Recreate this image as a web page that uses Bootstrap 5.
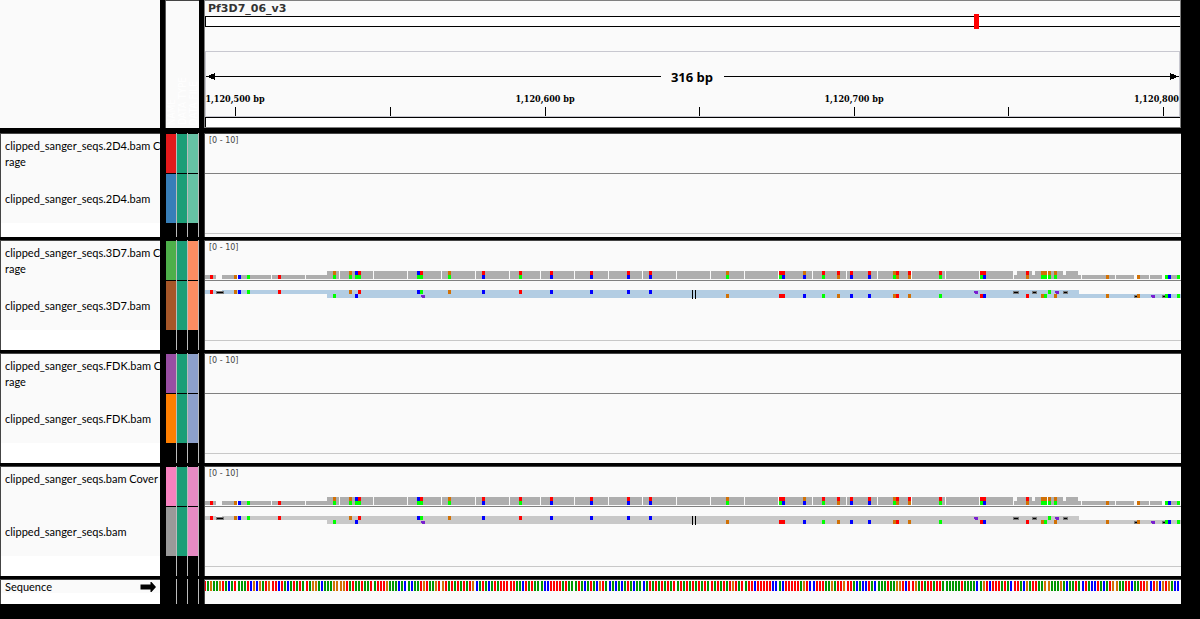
<!DOCTYPE html>
<html lang="en">
<head>
<meta charset="utf-8">
<meta name="viewport" content="width=device-width, initial-scale=1">
<title>Pf3D7_06_v3 alignments</title>
<link href="https://cdn.jsdelivr.net/npm/bootstrap@5.3.0/dist/css/bootstrap.min.css" rel="stylesheet">
<style>
  body { background: #000; color: #000; font: 11px/16px Lato, "DejaVu Sans", sans-serif; }
  .browser, .groups { gap: 3px; }
  .browser { padding-right: 19px; }
  .track-row { display: grid; grid-template-columns: 160px 34px minmax(0, 1fr); column-gap: 5px; }
  .pane { background: #fafafa; }
  .head-row { height: 128px; margin-bottom: 2px; }
  .group-row { height: 110px; }
  .group-row.first { height: 104px; }
  .seq-row { height: 25px; }

  .names { background: #fff; border-left: 1px solid #444; border-top: 1px solid #444; }
  .track-label { background: #fafafa; padding-left: 4px; white-space: pre; overflow: hidden; }
  .cov-label { height: 40px; padding-top: 4px; }
  .aln-label { height: 49px; }
  .seq-label { height: 13px; padding-right: 4px; }

  .attr-head { border-left: 1px solid #555; border-top: 1px solid #444; color: #fff; font-size: 10px; font-family: "DejaVu Sans Condensed", "DejaVu Sans", sans-serif; padding-bottom: 3px; }
  .attr-head span { writing-mode: vertical-rl; transform: rotate(180deg); width: 11px; line-height: 11px; white-space: nowrap; }
  .attrs { padding-left: 1px; }
  .attr { width: 11px; border-right: 1px solid #bbb; padding-top: 1px; }
  .chip-top { height: 39px; margin-bottom: 1px; }
  .chip-low { height: 49px; }

  .data { border-left: 1px solid #444; border-top: 1px solid #444; position: relative; }
  .data svg, .ruler svg { display: block; width: 100%; shape-rendering: crispEdges; }
  .range { position: absolute; left: 4px; top: 1px; font-size: 8px; line-height: 12px; color: #444; font-family: "DejaVu Sans", sans-serif; }

  .ruler { border: 1px solid #808080; }
  .chrom { font: bold 11px/15px "DejaVu Sans", sans-serif; color: #333; padding-left: 3px; height: 15px; }
  .ruler svg { overflow: visible; }
  .ruler svg text { fill: #000; text-anchor: middle; }
  .ruler svg .span-text { font: bold 13px "Open Sans", "DejaVu Sans", sans-serif; }
  .ruler svg .tick-text { font: bold 9px "DejaVu Serif Condensed", "DejaVu Serif", serif; }
  .ruler svg .last-tick { text-anchor: end; }
</style>
<script src="https://cdn.jsdelivr.net/npm/bootstrap@5.3.0/dist/js/bootstrap.bundle.min.js"></script>
</head>
<body>
<main class="browser d-flex flex-column">
  <header class="track-row head-row">
    <div class="pane"></div>
    <div class="pane attr-head d-flex justify-content-start align-items-end overflow-hidden">
      <span>NAME</span><span>DATA TYPE</span><span>DATA FILE</span>
    </div>
    <div class="pane ruler overflow-hidden">
      <div class="chrom">Pf3D7_06_v3</div>
      <svg id="ruler" height="111" aria-label="Genome ruler"></svg>
    </div>
  </header>
  <div id="groups" class="groups d-flex flex-column"></div>
  <footer class="track-row seq-row">
    <div class="names">
      <div class="track-label seq-label d-flex justify-content-between align-items-center">
        <span>Sequence</span>
        <svg width="16" height="10" viewBox="0 0 32 20" aria-hidden="true"><path d="M1 5h20V0h2l9 10-9 10h-2v-5H1z"/></svg>
      </div>
    </div>
    <div class="attrs d-flex"><div class="attr"></div><div class="attr"></div><div class="attr"></div></div>
    <div class="pane data"><svg id="sequence" height="12" viewBox="0 0 976 12" preserveAspectRatio="none" aria-label="Sequence"></svg></div>
  </footer>
</main>
<script>
  const VIEW = 976, ORIGIN = 205;
  const rect = (x, y, w, h, fill) => `<rect x="${x}" y="${y}" width="${w}" height="${h}" fill="${fill}"/>`;
  const C = { R: '#f00', G: '#0f0', B: '#00f', O: '#d17105' };

  // Reference bases by display colour; each run is followed by one pixel of rounding
  const runs = ('RGOGGORGBGR GGGRBOBOGRO RRBRGBGRGRG RGOOGBGGGOO OORGRGGRGGR GRRROGGGBGB GBGGRORGGOR ORGRGRGRGRO BGRGBGRGRRR RRGGBRGRGG ' +
    'GBBRRRRGRGG GRGBGRGBORG BGBGBGRGBGG BGRGRGRGRGR GRGRGRGRGRG RGRGRGRORGR GRRBRRRRRBB GBRRRRRGORB BRRRGGOGRRO RRGBGBBRGB ' +
    'GGGRGGOORBR ROGRGRRGRRG GGGGGRGGGGB GORBRRRGRGB RRGBOGRRGGO OGGGOGBGGRG BRGBBRGBGRO OGGRRBGGRRO BROBOROGBB').split(' ');
  const bases = [];
  let start = 204;
  runs.forEach(run => {
    [...run].forEach((b, i) => bases.push([start + 3 * i, b]));
    start += run.length * 3 + 1;
  });

  // Ruler
  const pc = x => (x - ORIGIN) / 975 * 100 + '%';
  const line = (x1, y1, x2, y2, c) => `<line x1="${x1}" y1="${y1}" x2="${x2}" y2="${y2}" stroke="${c}"/>`;
  let r = '<rect x="0.5" y="0.5" width="101%" height="10" fill="#fff" stroke="#000"/>' +
    rect(pc(974), -2, 5, 15, '#f00') +
    '<rect x="0.5" y="35.5" width="99.85%" height="65" fill="none" stroke="#c8c8d0"/>' +
    line(2, 60.5, pc(661), 60.5, '#000') + line(pc(724), 60.5, pc(1179), 60.5, '#000') +
    '<path d="M1 60.5 10 57v7z"/>' +
    '<svg x="100%" width="1" overflow="visible"><path d="M-1 60.5-10 57v7z"/></svg>' +
    `<text class="span-text" x="${pc(692)}" y="66">316 bp</text>`;
  [235, 390, 545, 699, 854, 1008, 1163].forEach((x, i) => {
    r += rect(pc(x), 91, 1, 9, '#000');
    if (i % 2 === 0 && i < 6) r += `<text class="tick-text" x="${pc(x)}" y="86">1,120,${500 + i * 50} bp</text>`;
  });
  r += `<text class="tick-text last-tick" x="${pc(1179)}" y="86">1,120,800</text>`;
  r += '<rect x="0.5" y="101.5" width="101%" height="12" fill="#fff" stroke="#000"/>';
  document.getElementById('ruler').innerHTML = r;

  // Mismatches: position, upper allele, lower allele
  const mism = [[210,'','R'],[234,'','O'],[238,'','B'],[247,'','G'],[278,'','R'],[333,'O','G'],[349,'O','G'],[355,'B','G'],[358,'R','G'],
    [417,'B','G'],[420,'R','G'],[448,'O','G'],[482,'R','B'],[519,'R','G'],[550,'R','B'],[590,'R','B'],[627,'R','B'],[649,'R','B'],
    [726,'O','G'],[779,'R','G'],[782,'R','B'],[803,'O','B'],[822,'R','G'],[837,'R','O'],[850,'R','B'],[868,'R','B'],[893,'O','G'],
    [896,'R','O'],[908,'R','O'],[939,'R','G'],[980,'R','G'],[983,'R','B'],[1026,'R','O'],[1041,'O','G'],[1044,'O','G'],[1048,'O','G'],
    [1054,'O','G'],[1106,'','O'],[1137,'','O'],[1165,'','G'],[1168,'','B'],[1177,'','G']];
  const upper = [[210,'R'],[234,'O'],[238,'B'],[247,'G'],[278,'R'],[349,'O'],[358,'R'],[417,'B'],[420,'G'],[448,'O'],[482,'B'],[519,'R'],
    [550,'B'],[590,'B'],[627,'B'],[649,'B'],[1048,'G']];
  const lower = [[333,'G'],[355,'B'],[726,'O'],[779,'R'],[782,'R'],[803,'B'],[822,'G'],[837,'O'],[850,'B'],[868,'B'],[893,'O'],[896,'R'],
    [908,'O'],[939,'G'],[980,'R'],[983,'B'],[1026,'R'],[1041,'O'],[1044,'G'],[1054,'O'],[1106,'O'],[1137,'O'],[1165,'G'],[1168,'B'],[1177,'G']];
  const near = (a, list) => list.some(x => Math.abs(x - a) < 2);

  function alignments(readColor) {
    let s = '';
    bases.forEach(([a]) => {
      const x = a - ORIGIN;
      if (!near(a, [216, 219, 1134, 1162])) s += rect(x, 34, 3, 4, '#aeaeae');
      if (a >= 326 && a < 1077 && !near(a, [1014, 1032, 1063])) s += rect(x, 30, 3, 4, '#aeaeae');
    });
    mism.forEach(([x, u, l]) => {
      if (u) s += rect(x - ORIGIN, 30, 3, 4, C[u]);
      s += rect(x - ORIGIN, 34, 3, 4, C[l]);
    });
    s += rect(0, 49, 874, 4, readColor) + rect(122, 53, 854, 4, readColor);
    s += rect(11, 49, 6, 4, '#fafafa');
    const dash = (x, y, w) => rect(x - ORIGIN, y, w, 3, '#777') + rect(x - ORIGIN + 1, y + 1, w - 2, 1, '#000');
    s += dash(216, 50, 8) + dash(1013, 50, 6) + dash(1032, 50, 5) + dash(1063, 50, 5) + dash(1134, 54, 5) + dash(1162, 54, 5);
    upper.forEach(([x, b]) => s += rect(x - ORIGIN, 49, 3, 4, C[b]));
    lower.forEach(([x, b]) => s += rect(x - ORIGIN, 53, 3, 4, C[b]));
    [[421, 54], [974, 50], [1055, 50], [1151, 54]].forEach(([x, y]) =>
      s += rect(x - ORIGIN, y, 4, 2, '#7a1fd0') + rect(x - ORIGIN + 1, y + 2, 3, 1, '#7a1fd0'));
    s += rect(487, 49, 1, 9, '#000') + rect(490, 49, 1, 9, '#000');
    return s;
  }

  // Track groups
  const groups = [
    { cov: 'clipped_sanger_seqs.2D4.bam C\nrage', aln: 'clipped_sanger_seqs.2D4.bam', top: ['#e41a1c', '#1b9e77', '#66c2a5'], low: '#377eb8' },
    { cov: 'clipped_sanger_seqs.3D7.bam C\nrage', aln: 'clipped_sanger_seqs.3D7.bam', top: ['#4daf4a', '#1b9e77', '#fc8d62'], low: '#a65628', reads: '#b3cde3' },
    { cov: 'clipped_sanger_seqs.FDK.bam C\nrage', aln: 'clipped_sanger_seqs.FDK.bam', top: ['#984ea3', '#1b9e77', '#8da0cb'], low: '#ff7f00' },
    { cov: 'clipped_sanger_seqs.bam Cover', aln: 'clipped_sanger_seqs.bam', top: ['#f781bf', '#1b9e77', '#e78ac3'], low: '#999999', reads: '#c8c8c8' }
  ];
  document.getElementById('groups').innerHTML = groups.map((g, i) => `
    <section class="track-row group-row ${i ? '' : 'first'}">
      <div class="names">
        <div class="track-label cov-label">${g.cov}</div>
        <div class="track-label aln-label d-flex align-items-center">${g.aln}</div>
      </div>
      <div class="attrs d-flex">${g.top.map((c, j) => `
        <div class="attr"><div class="chip-top" style="background:${c}"></div><div class="chip-low" style="background:${j ? c : g.low}"></div></div>`).join('')}
      </div>
      <div class="pane data">
        <svg height="100" viewBox="0 0 ${VIEW} 100" preserveAspectRatio="none" aria-label="Coverage and alignments">
          ${g.reads ? alignments(g.reads) : ''}${rect(0, 39, VIEW, 1, '#808080')}${rect(0, 99, VIEW, 1, '#c8c8c8')}
        </svg>
        <span class="range">[0 - 10]</span>
      </div>
    </section>`).join('');

  const S = { R: '#f00', G: '#009600', B: '#00f', O: '#d17105' };
  document.getElementById('sequence').innerHTML = bases.map(([x, b]) => rect(x - ORIGIN, 1, 2, 10, S[b])).join('');
</script>
</body>
</html>
